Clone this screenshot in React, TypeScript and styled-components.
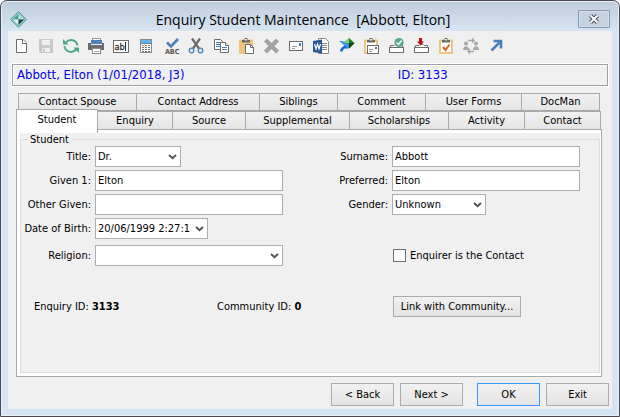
import React from "react";
import styled, { createGlobalStyle } from "styled-components";

const GlobalStyle = createGlobalStyle`
  *, *::before, *::after { box-sizing: border-box; }
  body { margin: 0; background: #f6f6f6; }
  body, button, input, select {
    font-family: "DejaVu Sans Condensed", "DejaVu Sans", sans-serif;
    font-size: 11px;
    line-height: 14px;
    color: #000;
  }
`;

const Window = styled.div`
  min-height: 100vh;
  display: flex;
  flex-direction: column;
  padding: 0 7px 7px;
  border: 1px solid #4c4850;
  border-radius: 7px 7px 0 0;
  background: linear-gradient(#bfcddb, #d7e4f2 30px);
  box-shadow: inset 0 0 0 1px #e8f0f8;
`;

const TitleBar = styled.header`
  height: 30px;
  display: grid;
  grid-template-columns: 18px 1fr 32px;
  align-items: center;
  padding: 0 2px;
`;

const Title = styled.h1`
  margin: 0;
  padding-top: 8px;
  font-family: "Open Sans", "Noto Sans", sans-serif;
  font-size: 14px;
  line-height: 20px;
  font-weight: 400;
  text-align: center;
  white-space: pre;
`;

const CloseButton = styled.button`
  width: 32px;
  height: 18px;
  margin-top: 6px;
  padding: 0;
  display: grid;
  place-items: center;
  border: 1px solid #8797ad;
  border-radius: 1px;
  background: #c5d2e0;
  box-shadow: inset 0 0 0 1px #d5e0ec;
`;

const AppMark = styled.svg`
  margin-top: 7px;
`;

const Body = styled.main`
  flex: 1;
  display: flex;
  flex-direction: column;
  background: #f0f0f0;
`;

const Toolbar = styled.div`
  display: flex;
  height: 31px;
  padding: 3px 1px;
`;

const ToolButton = styled.button`
  width: 25px;
  height: 25px;
  padding: 0;
  border: 0;
  background: none;
  svg { display: block; }
`;

const InfoBar = styled.div`
  display: grid;
  grid-template-columns: 382fr 210fr;
  align-items: center;
  height: 22px;
  margin: 2px 4px 0;
  padding-left: 4px;
  border: 1px solid #a0a0a0;
  box-shadow: 0 0 0 1px #fff, inset 1px 1px 0 #fff;
  color: #0000e6;
  font-size: 13px;
  line-height: 16px;
`;

const TabRow = styled.div<{ $columns: string; $back?: boolean }>`
  display: grid;
  grid-template-columns: ${(p) => p.$columns};
  height: ${(p) => (p.$back ? 18 : 19)}px;
  margin: ${(p) => (p.$back ? "7px 12px 0 10px" : "0 11px 0 8px")};
`;

const Tab = styled.button<{ $active?: boolean }>`
  position: relative;
  z-index: ${(p) => (p.$active ? 1 : 0)};
  min-width: 0;
  margin: ${(p) => (p.$active ? "-2px 0 -3px" : "0 0 0 -1px")};
  padding: ${(p) => (p.$active ? "0 0 3px" : "0")};
  border: 1px solid #a9a9a9;
  border-bottom-width: ${(p) => (p.$active ? 0 : 1)}px;
  background: ${(p) => (p.$active ? "#fff" : "linear-gradient(#f1f1f1, #e5e5e5)")};
  white-space: nowrap;
  &:first-child { margin-left: 0; }
`;

const Panel = styled.section`
  flex: 1;
  display: flex;
  margin: -1px 10px 0 8px;
  padding: 3px 1px 3px 3px;
  border: 1px solid #a9a9a9;
  background: #fff;
`;

const GroupShell = styled.div`
  flex: 1;
  display: flex;
  min-width: 0;
  background: #f0f0f0;
`;

const Group = styled.fieldset`
  flex: 1;
  min-width: 0;
  margin: 0;
  padding: 0 19px 12px 0;
  border: 1px solid #dcdcdc;
`;

const Legend = styled.legend`
  margin-left: 7px;
  padding: 0 3px 0 2px;
  line-height: 13px;
`;

const Form = styled.div`
  display: grid;
  grid-template-columns: 70px minmax(0, 1fr) 101px minmax(0, 1fr);
  column-gap: 4px;
  row-gap: 3px;
  align-items: center;
`;

const Label = styled.label`
  text-align: right;
  white-space: nowrap;
`;

const TextBox = styled.input`
  width: 100%;
  height: 21px;
  padding: 0 2px;
  border: 1px solid #abadb3;
  border-radius: 0;
  background: #fff;
`;

const ComboShell = styled.div<{ $width: string }>`
  position: relative;
  width: ${(p) => p.$width};
  svg {
    position: absolute;
    right: 4px;
    top: 8px;
    pointer-events: none;
  }
`;

const ComboSelect = styled.select`
  display: block;
  appearance: none;
  width: 100%;
  height: 21px;
  padding: 0 14px 0 2px;
  border: 1px solid #abadb3;
  border-radius: 0;
  background: #fff;
`;

const ReligionLabel = styled(Label)`
  margin-top: 3px;
`;

const ReligionField = styled.div`
  margin-top: 3px;
`;

const CheckLabel = styled.label`
  grid-column: 4;
  display: flex;
  align-items: center;
  gap: 4px;
  margin: 3px 0 0 1px;
  white-space: nowrap;
`;

const CheckBox = styled.input`
  appearance: none;
  width: 13px;
  height: 13px;
  margin: 0;
  border: 1px solid #6e6e6e;
  background: #fff;
  &:checked { background: #3c7fd0; }
`;

const IdRow = styled.div`
  display: grid;
  grid-template-columns: 183fr 176fr 187fr;
  align-items: center;
  margin: 30px 0 0 13px;
`;

const PushButton = styled.button<{ $primary?: boolean; $wide?: boolean }>`
  width: ${(p) => (p.$wide ? 128 : 63)}px;
  height: ${(p) => (p.$wide ? 21 : 23)}px;
  padding: 0;
  border: 1px solid ${(p) => (p.$primary ? "#3399ff" : "#acacac")};
  background: linear-gradient(#f1f1f1, #e4e4e4);
  white-space: nowrap;
`;

const Footer = styled.footer`
  display: flex;
  justify-content: flex-end;
  gap: 14px;
  padding: 6px 3px 3px;
`;

const ButtonPair = styled.div`
  display: flex;
  gap: 6px;
`;

const GREY = "#6b6b6b";
const BLUE = "#4a7fb8";
const TAN = "#efc47e";

const Clipboard = ({ fill = true }: { fill?: boolean }) => (
  <g>
    <rect x="6" y="6.5" width="12" height="12.5" fill={fill ? TAN : "#fff"} stroke={TAN} strokeWidth="2" />
    <path d="M8 8.5V6h2.5V4h3v2H16v2.5z" fill={GREY} />
    <rect x="11" y="5" width="2" height="1.5" fill="#f0f0f0" />
  </g>
);

const Tray = () => (
  <g fill="#fff" stroke={GREY}>
    <path d="M6.5 14V11.5h3.500l1-1h3l1 1h3.500V14" />
    <rect x="5.5" y="13.5" width="14" height="5" />
  </g>
);

const tools: { name: string; art: React.ReactNode }[] = [
  {
    name: "New",
    art: (
      <g fill="#fff" stroke={GREY}>
        <path d="M7.5 5.5h6.500l3.500 3.500v9.500h-10z" />
        <path d="M13.5 5.5v4h4" />
      </g>
    ),
  },
  {
    name: "Save",
    art: (
      <g>
        <path d="M5 5h14v14h-13l-1-1z" fill="#c9c9c9" />
        <rect x="8" y="6" width="8" height="5" fill="#f0f0f0" />
        <rect x="8" y="14" width="8" height="4" fill="#f0f0f0" />
        <rect x="9" y="15" width="2" height="3" fill="#c9c9c9" />
      </g>
    ),
  },
  {
    name: "Refresh",
    art: (
      <g fill="none" stroke="#4fa885" strokeWidth="2">
        <path d="M7 8.5A6.5 6.5 0 0 1 18.5 11.5M17 15.5A6.5 6.5 0 0 1 5.5 12" />
        <path d="M4 5v5.5h5.5zM20 19v-5.5h-5.5z" fill="#4fa885" stroke="none" />
      </g>
    ),
  },
  {
    name: "Print",
    art: (
      <g>
        <rect x="8.5" y="4.5" width="8" height="4" fill="#fff" stroke="#9a9a9a" />
        <path d="M4 9h3v2h11v-2h2v7h-16z" fill={GREY} />
        <rect x="7" y="6" width="11" height="4" fill={BLUE} />
        <rect x="8.5" y="14.5" width="8" height="5" fill="#fff" stroke="#8a8a8a" />
        <path d="M10 17.5h5" stroke="#b0b0b0" />
      </g>
    ),
  },
  {
    name: "Rename",
    art: (
      <g>
        <rect x="4.5" y="6.5" width="15" height="12" fill="#fff" stroke={GREY} />
        <text x="5.5" y="16" fontSize="9" fill="#333" stroke="#333" strokeWidth="0.3">ab</text>
        <path d="M16.5 8v9" stroke="#222" />
      </g>
    ),
  },
  {
    name: "Calculator",
    art: (
      <g>
        <rect x="6.5" y="5.5" width="11" height="13" fill="#fff" stroke="#8a8a8a" />
        <rect x="7" y="6" width="10" height="3" fill="#63b3ee" />
        <path d="M6 9.5h12" stroke="#5a87b0" />
        <path d="M8 11.5h8" stroke="#c77b3e" strokeDasharray="2 1" />
        <path d="M8 13.5h8M8 15.5h8M8 17.5h8" stroke={GREY} strokeDasharray="2 1" />
      </g>
    ),
  },
  {
    name: "Spelling",
    art: (
      <g>
        <path d="M8 8.5l4 4 7-7.5" fill="none" stroke={BLUE} strokeWidth="2.6" />
        <text x="6" y="20" fontSize="7" fontWeight="700" fill="#555">ABC</text>
      </g>
    ),
  },
  {
    name: "Cut",
    art: (
      <g fill="none">
        <path d="M8 4.5l7 10M16 4.5l-7 10" stroke={GREY} strokeWidth="2.2" />
        <circle cx="7.5" cy="16.5" r="2.3" stroke={BLUE} strokeWidth="1.3" />
        <circle cx="16.5" cy="16.5" r="2.3" stroke={BLUE} strokeWidth="1.3" />
      </g>
    ),
  },
  {
    name: "Copy",
    art: (
      <g fill="#fff" stroke={GREY}>
        <path d="M5.5 5.5h6l2 2v8h-8z" />
        <path d="M7 8.5h4M7 10.5h4M7 12.5h4" stroke={BLUE} />
        <path d="M11.5 8.5h5l3 3v7h-8z" />
        <path d="M16.5 8.5v3h3" />
        <path d="M13 13.5h5M13 15.5h5" stroke={BLUE} />
      </g>
    ),
  },
  {
    name: "Paste",
    art: (
      <g>
        <Clipboard />
        <path d="M11.5 10.5h5l3 3v6h-8z" fill="#fff" stroke={GREY} />
        <path d="M16.5 10.5v3h3" fill="none" stroke={GREY} />
      </g>
    ),
  },
  {
    name: "Delete",
    art: <path d="M6.5 6l12 12M18.5 6l-12 12" stroke="#a3a3a3" strokeWidth="4.4" />,
  },
  {
    name: "Mail",
    art: (
      <g>
        <rect x="5.5" y="7.5" width="13" height="9" fill="#fff" stroke={GREY} />
        <path d="M8 12.5h5M8 14.5h3" stroke="#9a9a9a" />
        <rect x="15" y="9" width="2" height="3" fill={BLUE} />
      </g>
    ),
  },
  {
    name: "Word document",
    art: (
      <g>
        <path d="M9.5 4.5h7l3 3v12h-10z" fill="#fff" stroke="#8a8a8a" />
        <path d="M13 9.5h5M13 11.5h5M13 13.5h5M13 15.5h5" stroke="#8a8a8a" />
        <path d="M4 7l9-1.5v14l-9-1.5z" fill="#2b5797" />
        <path d="M5.5 10l1.500 5 1.500-5 1.500 5 1.500-5" fill="none" stroke="#fff" strokeWidth="1.2" />
      </g>
    ),
  },
  {
    name: "Synchronise",
    art: (
      <g>
        <path d="M15 4l5.500 5-5.500 5.500-5.500-5.500z" fill="#1f7a2c" />
        <path d="M15 4v5h-5.500z" fill="#7ed36c" />
        <path d="M15 14.5v-5.500h5.500z" fill="#0d3e1c" />
        <path d="M5 7.5c4-1 6 0 8 2.500l2-1-1 6-5.500-1 2-1.500c-1.500-2.500-3-4-5.500-5z" fill="#3f9cf5" />
        <path d="M6 17.5c0-3 2-5 5.500-6l1.500 2c-2.500.5-4 2-4.500 4z" fill="#1768cf" />
      </g>
    ),
  },
  {
    name: "Paste mail",
    art: (
      <g>
        <Clipboard fill={false} />
        <rect x="8.5" y="11.5" width="11" height="8" fill="#fff" stroke={GREY} />
        <path d="M10 15.5h4M10 17.5h3" stroke="#9a9a9a" />
        <rect x="16" y="13" width="2" height="2" fill={BLUE} />
      </g>
    ),
  },
  {
    name: "Approve",
    art: (
      <g>
        <Tray />
        <circle cx="15" cy="8.5" r="4.6" fill="#58a88c" />
        <path d="M12.5 8.5l2 2 3-4" fill="none" stroke="#fff" strokeWidth="1.3" />
      </g>
    ),
  },
  {
    name: "Import",
    art: (
      <g>
        <Tray />
        <path d="M10 4h3v3.500h2l-3.500 4-3.500-4h2z" fill="#b3161b" />
      </g>
    ),
  },
  {
    name: "Tasks",
    art: (
      <g>
        <Clipboard fill={false} />
        <path d="M9 13l2.500 3 4-5.500" fill="none" stroke="#d06a2c" strokeWidth="2" />
      </g>
    ),
  },
  {
    name: "Community",
    art: (
      <g fill="#a8a8a8">
        <circle cx="7" cy="9.5" r="2" />
        <path d="M4 16c0-5 6-5 6 0z" />
        <circle cx="17" cy="9.5" r="2" />
        <path d="M14 16c0-5 6-5 6 0z" />
        <path d="M9 6.5h5M15 17.5h-5" stroke="#a8a8a8" strokeWidth="1.4" />
        <path d="M13 3.5l3 3-3 3zM11 14.5l-3 3 3 3z" />
      </g>
    ),
  },
  {
    name: "Open",
    art: <path d="M7.5 16.5l9-9M9.5 7h7.5v7.5" fill="none" stroke={BLUE} strokeWidth="2.6" />,
  },
];

const Combo = ({ id, value, width }: { id: string; value: string; width: string }) => (
  <ComboShell $width={width}>
    <ComboSelect id={id} defaultValue={value}>
      <option value={value}>{value}</option>
    </ComboSelect>
    <svg width="9" height="6" viewBox="0 0 9 6" aria-hidden="true">
      <path d="M1 1l3.500 3.200L8 1" fill="none" stroke="#555" strokeWidth="2" />
    </svg>
  </ComboShell>
);

const backTabs = ["Contact Spouse", "Contact Address", "Siblings", "Comment", "User Forms", "DocMan"];
const frontTabs = ["Student", "Enquiry", "Source", "Supplemental", "Scholarships", "Activity", "Contact"];

export default function App() {
  return (
    <>
      <GlobalStyle />
      <Window>
        <TitleBar>
          <AppMark width="17" height="17" viewBox="0 0 17 17" aria-hidden="true">
            <path d="M8.5 0.5l8 8-8 8-8-8z" fill="#8cc4bd" stroke="#5ba79f" />
            <path d="M8.5 3v5.500H3z" fill="#3d9e98" />
            <path d="M8.5 3v5.500H14z" fill="#b7e4dc" />
            <path d="M8.5 14V8.500H3z" fill="#dff3ef" />
            <path d="M8.5 14V8.500H14z" fill="#24474f" />
          </AppMark>
          <Title>{"Enquiry Student Maintenance  [Abbott, Elton]"}</Title>
          <CloseButton aria-label="Close">
            <svg width="12" height="10" viewBox="0 0 12 10">
              <path d="M2.500 1.500l7 7M9.500 1.500l-7 7" stroke="#4b4b5a" strokeWidth="4" />
              <path d="M2.500 1.500l7 7M9.500 1.500l-7 7" stroke="#fff" strokeWidth="2" />
            </svg>
          </CloseButton>
        </TitleBar>
        <Body>
          <Toolbar role="toolbar">
            {tools.map((t) => (
              <ToolButton key={t.name} aria-label={t.name}>
                <svg width="25" height="25" viewBox="0 0 25 25">{t.art}</svg>
              </ToolButton>
            ))}
          </Toolbar>
          <InfoBar>
            <span>Abbott, Elton (1/01/2018, J3)</span>
            <span>ID: 3133</span>
          </InfoBar>
          <TabRow $back $columns="119fr 123fr 78fr 88fr 96fr 78fr" role="tablist">
            {backTabs.map((t) => (
              <Tab key={t} role="tab">{t}</Tab>
            ))}
          </TabRow>
          <TabRow $columns="82fr 75fr 73fr 104fr 99fr 76fr 76fr" role="tablist">
            {frontTabs.map((t, i) => (
              <Tab key={t} role="tab" $active={i === 0} aria-selected={i === 0}>{t}</Tab>
            ))}
          </TabRow>
          <Panel>
            <GroupShell>
              <Group>
                <Legend>Student</Legend>
                <Form>
                  <Label htmlFor="title">Title:</Label>
                  <Combo id="title" value="Dr." width="46%" />
                  <Label htmlFor="surname">Surname:</Label>
                  <TextBox id="surname" defaultValue="Abbott" />
                  <Label htmlFor="given">Given 1:</Label>
                  <TextBox id="given" defaultValue="Elton" />
                  <Label htmlFor="preferred">Preferred:</Label>
                  <TextBox id="preferred" defaultValue="Elton" />
                  <Label htmlFor="other">Other Given:</Label>
                  <TextBox id="other" />
                  <Label htmlFor="gender">Gender:</Label>
                  <Combo id="gender" value="Unknown" width="50%" />
                  <Label htmlFor="dob">Date of Birth:</Label>
                  <Combo id="dob" value="20/06/1999 2:27:1" width="60%" />
                  <span />
                  <span />
                  <ReligionLabel htmlFor="religion">Religion:</ReligionLabel>
                  <ReligionField>
                    <Combo id="religion" value="" width="100%" />
                  </ReligionField>
                  <CheckLabel>
                    <CheckBox type="checkbox" />
                    Enquirer is the Contact
                  </CheckLabel>
                </Form>
                <IdRow>
                  <span>Enquiry ID: <b>3133</b></span>
                  <span>Community ID: <b>0</b></span>
                  <PushButton $wide>Link with Community...</PushButton>
                </IdRow>
              </Group>
            </GroupShell>
          </Panel>
          <Footer>
            <ButtonPair>
              <PushButton>&lt; Back</PushButton>
              <PushButton>Next &gt;</PushButton>
            </ButtonPair>
            <ButtonPair>
              <PushButton $primary>OK</PushButton>
              <PushButton>Exit</PushButton>
            </ButtonPair>
          </Footer>
        </Body>
      </Window>
    </>
  );
}
